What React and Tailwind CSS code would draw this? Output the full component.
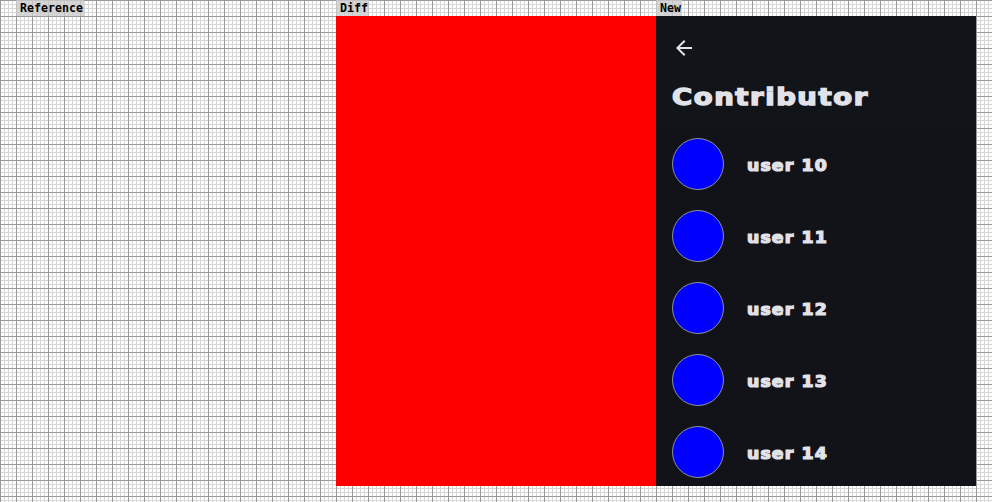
import React from 'react';

const users = ['user 10', 'user 11', 'user 12', 'user 13', 'user 14'];

function Label({ children }) {
  return (
    <div className="h-4 w-fit whitespace-pre bg-[#cccccc]/80 pl-1 pr-px font-['DejaVu_Sans_Mono','Liberation_Mono',monospace] text-[11.63px] font-bold leading-[17px] text-black">
      {children}
    </div>
  );
}

function ArrowBack() {
  return (
    <svg className="size-6" viewBox="0 0 24 24" fill="#e2e2e9" aria-hidden="true">
      <path d="M20 11H7.83l5.59-5.59L12 4l-8 8 8 8 1.41-1.41L7.83 13H20v-2z" />
    </svg>
  );
}

function ContributorScreen() {
  return (
    <main className="h-full w-80 overflow-hidden bg-[#121318] font-['DejaVu_Sans','Liberation_Sans',sans-serif] font-bold text-[#e2e2e9] [stroke-linejoin:round]">
      <header className="h-28 bg-[#111418] px-4">
        <div className="flex h-16 items-center">
          <ArrowBack />
        </div>
        <h1 className="flex h-[35px] w-fit origin-left scale-x-[1.22] items-center whitespace-nowrap text-[22.5px] font-bold tracking-[1.3px] [-webkit-text-stroke:1.4px_#e2e2e9]">
          Contributor
        </h1>
      </header>
      <ul className="px-4">
        {users.map((user) => (
          <li key={user} className="flex h-18 items-center gap-[23px]">
            <div className="size-[52px] shrink-0 rounded-full border border-[#8e9099] bg-[#0000ff]" />
            <span className="origin-left scale-x-[1.15] whitespace-nowrap pt-1 text-[15px] tracking-[1px] [-webkit-text-stroke:1.2px_#e2e2e9]">{user}</span>
          </li>
        ))}
      </ul>
    </main>
  );
}

export default function App() {
  return (
    <div className="flex h-[502px] w-[992px] flex-col overflow-hidden bg-white bg-[linear-gradient(to_right,#999_1px,transparent_1px),linear-gradient(to_bottom,#999_1px,transparent_1px),linear-gradient(to_right,#d6d6d6_1px,transparent_1px),linear-gradient(to_bottom,#d6d6d6_1px,transparent_1px)] bg-[size:16px_16px,16px_16px,4px_4px,4px_4px]">
      <div className="flex h-4 shrink-0 pl-4">
        <div className="w-80"><Label>Reference</Label></div>
        <div className="w-80"><Label>Diff</Label></div>
        <div className="w-80"><Label>New</Label></div>
      </div>
      <div className="flex h-[470px] shrink-0 pl-4">
        <div className="w-80" />
        <div className="w-80 bg-[#ff0000]" />
        <ContributorScreen />
      </div>
    </div>
  );
}
